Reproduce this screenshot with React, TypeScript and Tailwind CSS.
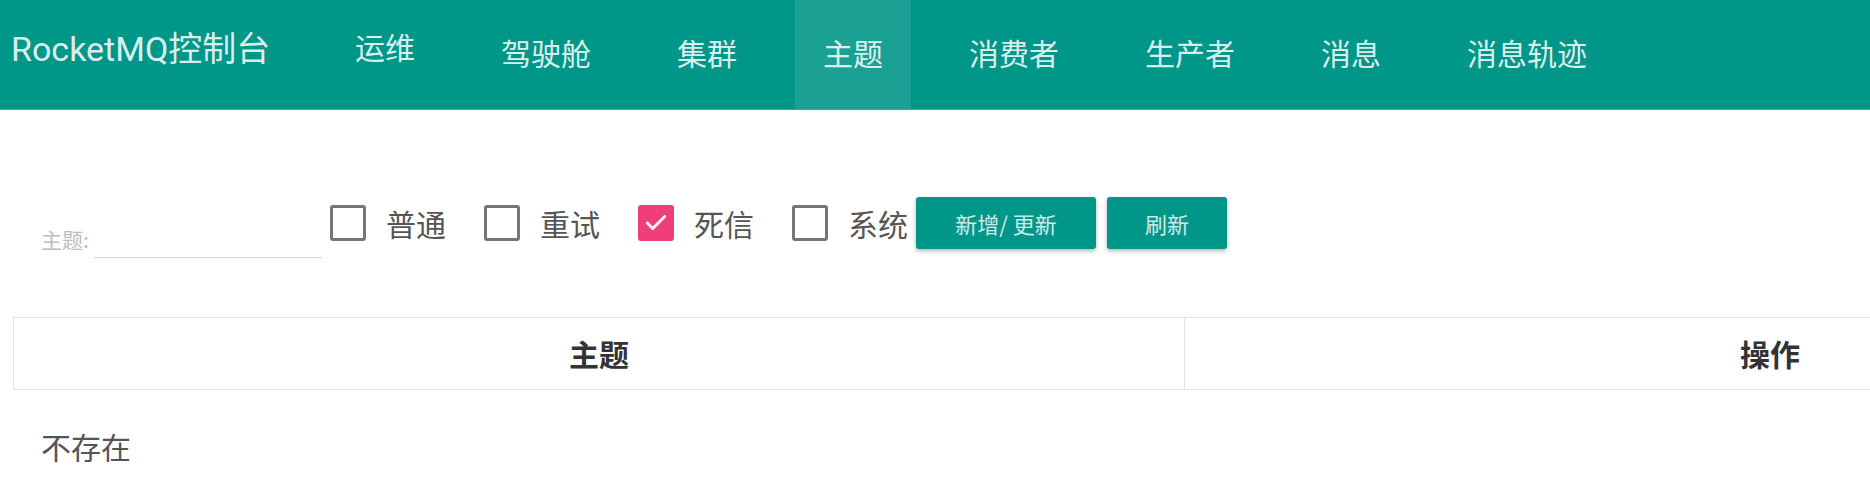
import { Check } from 'lucide-react'

const NAV = ['运维', '驾驶舱', '集群', '主题', '消费者', '生产者', '消息', '消息轨迹']

function Box({ label, checked }: { label: string; checked?: boolean }) {
  return (
    <label className="flex items-center cursor-pointer">
      <span
        className={
          checked
            ? 'flex h-[36px] w-[36px] flex-none items-center justify-center rounded-[3px] bg-[#ef3f7b]'
            : 'h-[36px] w-[36px] flex-none rounded-[3px] border-[3px] border-[#767676]'
        }
      >
        {checked && <Check size={26} strokeWidth={2.6} className="text-white" />}
      </span>
      <span className="ml-[20px] text-[30px] leading-[30px] text-[#555]">{label}</span>
    </label>
  )
}

export default function App() {
  return (
    <div className="w-full overflow-hidden bg-white font-['Noto_Sans_CJK_SC','Noto_Sans',sans-serif]">
      <div className="w-[2370px] pb-[30px]">
        {/* navbar */}
        <header className="flex h-[110px] items-stretch border-b border-[#3aa89d] bg-[#009688] text-white/[0.87]">
          <div className="flex w-[327px] flex-none items-center pb-[11px] pl-[11px]">
            <span className="font-['Roboto','Noto_Sans_CJK_SC',sans-serif] text-[34px] leading-[34px]">
              RocketMQ控制台
            </span>
          </div>
          <ul className="flex gap-[30px]">
            {NAV.map((item) => (
              <li
                key={item}
                className={
                  'flex items-center px-[28px] ' +
                  (item === '主题' ? 'bg-white/10' : '')
                }
              >
                <a
                  className={
                    'text-[30px] leading-[30px] ' + (item === '运维' ? 'pb-[18px]' : 'pb-[6px]')
                  }
                >
                  {item}
                </a>
              </li>
            ))}
          </ul>
        </header>

        <main className="pl-[13px]">
          {/* filters */}
          <div className="mt-[87px] flex h-[52px] items-center pl-[28px]">
            <div className="mt-[30px] flex items-end self-start">
              <span className="mb-[8px] w-[53px] text-[21px] leading-[21px] text-[#bdbdbd]">主题:</span>
              <div className="h-[31px] w-[228px] border-b border-[#d6d6d6]" />
            </div>
            <div className="ml-[8px] flex items-center gap-[38px]">
              <Box label="普通" />
              <Box label="重试" />
              <Box label="死信" checked />
              <Box label="系统" />
            </div>
            <button className="ml-[8px] flex h-[52px] w-[180px] items-center justify-center rounded-[3px] bg-[#009688] text-[22px] text-white/80 shadow-[0_2px_4px_rgba(0,0,0,0.3)]">
              新增/ 更新
            </button>
            <button className="ml-[11px] flex h-[52px] w-[120px] items-center justify-center rounded-[3px] bg-[#009688] text-[22px] text-white/80 shadow-[0_2px_4px_rgba(0,0,0,0.3)]">
              刷新
            </button>
          </div>

          {/* table */}
          <table className="mt-[68px] w-[2343px] table-fixed border-collapse border border-[#e3e3e3]">
            <thead>
              <tr>
                <th className="h-[72px] border border-[#e3e3e3] text-center text-[30px] font-bold text-[#333]">主题</th>
                <th className="h-[72px] border border-[#e3e3e3] text-center text-[30px] font-bold text-[#333]">操作</th>
              </tr>
            </thead>
          </table>

          <p className="mt-[41px] pl-[28px] text-[30px] leading-[30px] text-[#555]">不存在</p>
        </main>
      </div>
    </div>
  )
}
